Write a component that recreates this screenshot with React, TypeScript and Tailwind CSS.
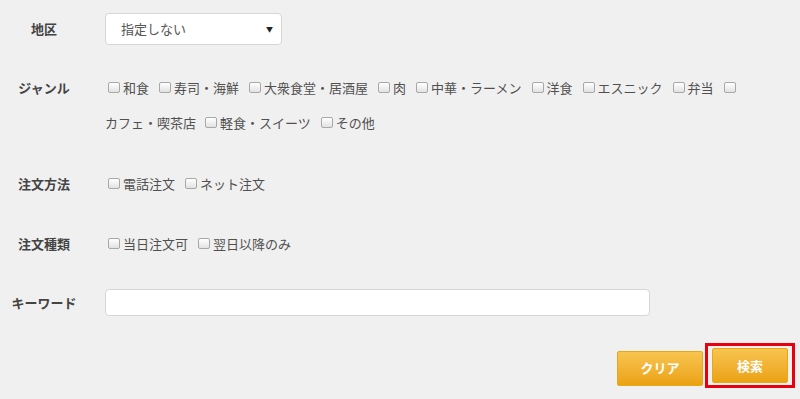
import React from "react";

const genresLine1 = ["和食", "寿司・海鮮", "大衆食堂・居酒屋", "肉", "中華・ラーメン", "洋食", "エスニック", "弁当"];
const genresLine2 = ["軽食・スイーツ", "その他"];

function Box() {
  return (
    <span className="inline-block w-[12px] h-[11px] mr-[3px] rounded-[2px] border border-[#a8a8a8] bg-gradient-to-b from-white to-[#e2e2e2] shrink-0" />
  );
}

function Check({ label }: { label: string }) {
  return (
    <span className="flex items-center mr-[10px]">
      <Box />
      <span>{label}</span>
    </span>
  );
}

function Label({ children }: { children: React.ReactNode }) {
  return <div className="w-[88px] shrink-0 text-center font-bold text-[13px] text-[#444]">{children}</div>;
}

export default function App() {
  return (
    <div
      className="w-[800px] h-[399px] bg-[#f0f0f0] text-[13px] text-[#505050] pt-[13px] overflow-hidden"
      style={{ fontFamily: '"Noto Sans CJK JP", "Noto Sans", sans-serif' }}
    >
      {/* 地区 */}
      <div className="flex items-center h-[32px]">
        <Label>地区</Label>
        <div className="ml-[17px] w-[177px] h-[32px] bg-white border border-[#d6d6d6] rounded-[4px] flex items-center justify-between pl-[15px] pr-[8px] text-[#555]">
          <span>指定しない</span>
          <span className="text-[7px] text-[#222]">▼</span>
        </div>
      </div>

      {/* ジャンル */}
      <div className="flex items-start mt-[25px]">
        <div className="leading-[35px]">
          <Label>ジャンル</Label>
        </div>
        <div className="ml-[17px] flex flex-col leading-[35px]">
          <div className="flex items-center h-[35px] pl-[3px]">
            {genresLine1.map((g) => (
              <Check key={g} label={g} />
            ))}
            <Box />
          </div>
          <div className="flex items-center h-[35px]">
            <span className="mr-[9px]">カフェ・喫茶店</span>
            {genresLine2.map((g) => (
              <Check key={g} label={g} />
            ))}
          </div>
        </div>
      </div>

      {/* 注文方法 */}
      <div className="flex items-center h-[35px] mt-[26px]">
        <Label>注文方法</Label>
        <div className="ml-[17px] pl-[3px] flex items-center">
          <Check label="電話注文" />
          <Check label="ネット注文" />
        </div>
      </div>

      {/* 注文種類 */}
      <div className="flex items-center h-[35px] mt-[25px]">
        <Label>注文種類</Label>
        <div className="ml-[17px] pl-[3px] flex items-center">
          <Check label="当日注文可" />
          <Check label="翌日以降のみ" />
        </div>
      </div>

      {/* キーワード */}
      <div className="flex items-center h-[27px] mt-[28px]">
        <Label>キーワード</Label>
        <input
          type="text"
          className="ml-[17px] w-[545px] h-[27px] bg-white border border-[#d6d6d6] rounded-[4px] outline-none px-2"
        />
      </div>

      {/* buttons */}
      <div className="flex justify-end items-center mt-[27px] pr-[5px]">
        <button className="w-[86px] h-[35px] mt-[5px] mr-[2px] rounded-[2px] border border-[#e8a816] bg-gradient-to-b from-[#f8c44e] to-[#eba20c] text-white font-bold text-[13px]">
          クリア
        </button>
        <div className="border-[3px] border-[#e8000f] px-[4px] py-[2px]">
          <button className="w-[76px] h-[35px] block rounded-[2px] border border-[#e8a816] bg-gradient-to-b from-[#f8c44e] to-[#eba20c] text-white font-bold text-[13px]">
            検索
          </button>
        </div>
      </div>
    </div>
  );
}
